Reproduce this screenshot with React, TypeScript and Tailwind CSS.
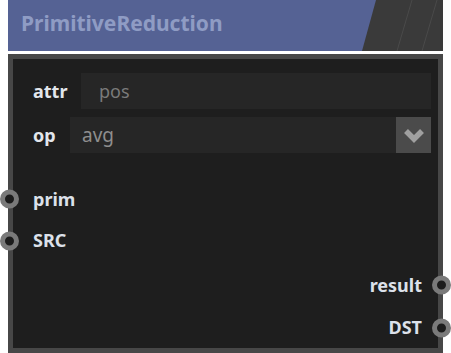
import React from "react";

const font = { fontFamily: '"Noto Sans", "Open Sans", sans-serif' };

function Socket({ side }: { side: "left" | "right" }) {
  return (
    <div
      className={`absolute top-1/2 -translate-y-1/2 w-[19px] h-[19px] rounded-full border-[5px] border-[#7a7a7a] bg-[#1c1c1c] ${
        side === "left" ? "left-[-13px]" : "right-[-13px]"
      }`}
    />
  );
}

export default function App() {
  return (
    <div className="w-[451px] h-[353px] bg-white overflow-hidden" style={font}>
      <div className="ml-[8px] w-[435px]">
        <div className="relative h-[51px] bg-[#556294] overflow-hidden">
          <svg className="absolute inset-0" width="435" height="51" viewBox="0 0 435 51">
            <polygon points="368,0 435,0 435,51 354,51" fill="#3a3a3a" />
            <line x1="404" y1="0" x2="389" y2="51" stroke="#4a4a4a" strokeWidth="1" />
            <line x1="429" y1="0" x2="414" y2="51" stroke="#4a4a4a" strokeWidth="1" />
          </svg>
          <div className="relative pl-[13px] pt-[8px] text-[21px] leading-[30px] font-bold text-[#8f9cc4]">
            PrimitiveReduction
          </div>
        </div>
        <div className="h-[3px]" />
        <div className="h-[299px] border-[5px] border-[#474747] bg-[#1e1e1e] flex flex-col pt-[14px] pr-[7px]">
          <div className="flex items-center h-[36px]">
            <div className="pl-[20px] w-[68px] text-[18px] font-bold text-[#e2e6ec]">attr</div>
            <div className="flex-1 h-[36px] bg-[#262626] flex items-center pl-[18px] text-[18px] text-[#7a7a7a]">
              pos
            </div>
          </div>
          <div className="flex items-center h-[36px] mt-[8px]">
            <div className="pl-[20px] w-[57px] text-[18px] font-bold text-[#e2e6ec]">op</div>
            <div className="flex-1 h-[36px] bg-[#262626] flex items-center pl-[12px] text-[19px] text-[#8e8e8e]">
              avg
            </div>
            <div className="w-[35px] h-[36px] bg-[#4b4b4b] flex items-center justify-center">
              <svg width="22" height="15" viewBox="0 0 22 15">
                <polyline points="3,3 11,11 19,3" fill="none" stroke="#a0a0a0" strokeWidth="5.5" strokeLinejoin="miter" />
              </svg>
            </div>
          </div>
          <div className="relative flex items-center h-[43px] mt-[26px]">
            <Socket side="left" />
            <div className="pl-[20px] text-[18px] font-bold text-[#dce1ea]">prim</div>
          </div>
          <div className="relative flex items-center h-[44px]">
            <Socket side="left" />
            <div className="pl-[20px] text-[18px] font-bold text-[#dce1ea]">SRC</div>
          </div>
          <div className="relative flex items-center justify-end h-[44px] mt-[3px] -mr-[7px]">
            <div className="pr-[16px] text-[18px] font-bold text-[#dce1ea]">result</div>
            <Socket side="right" />
          </div>
          <div className="relative flex items-center justify-end h-[43px] mt-[1px] -mr-[7px]">
            <div className="pr-[16px] text-[18px] font-bold text-[#dce1ea]">DST</div>
            <Socket side="right" />
          </div>
        </div>
      </div>
    </div>
  );
}
